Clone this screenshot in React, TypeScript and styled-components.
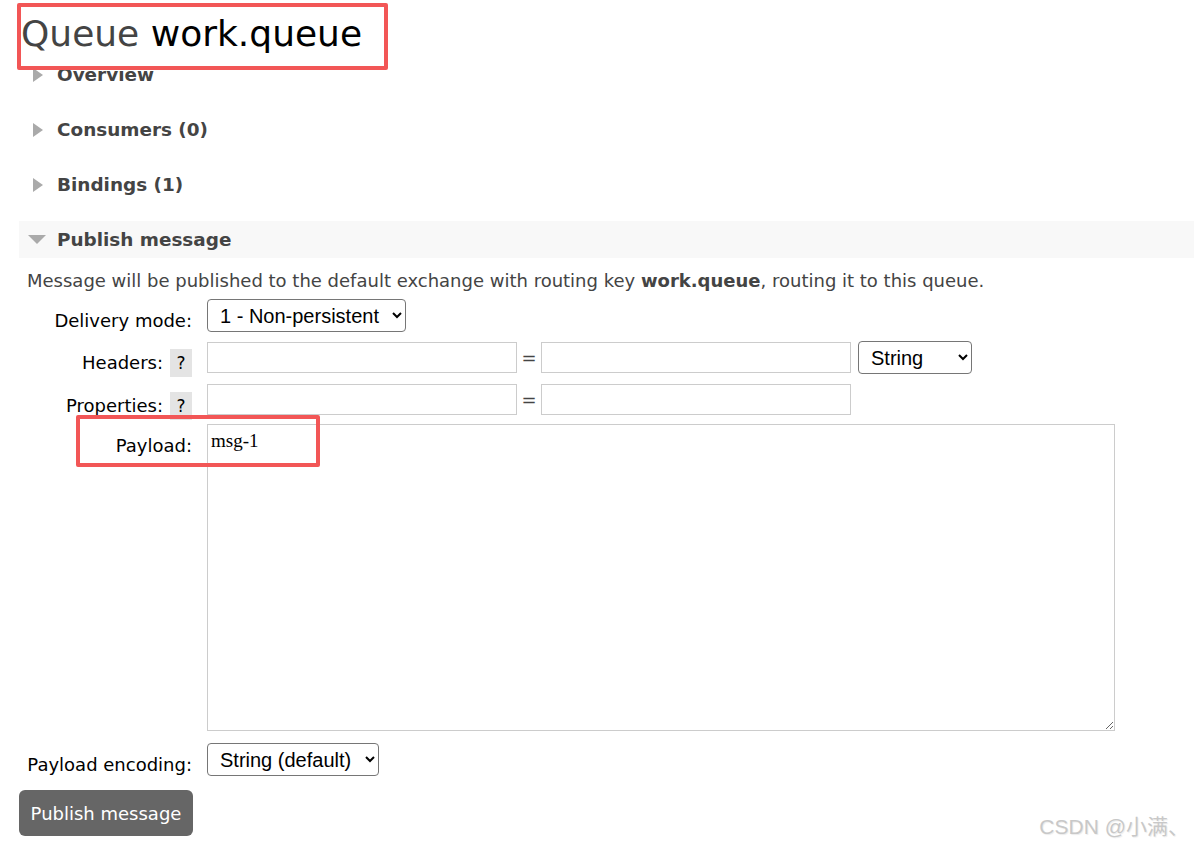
import * as React from 'react'
import styled, { createGlobalStyle } from 'styled-components'

const GlobalStyle = createGlobalStyle`
  html, body {
    margin: 0;
    padding: 0;
    background: #fff;
  }
  body {
    font-family: "DejaVu Sans", Verdana, sans-serif;
    color: #444;
  }
`

const Page = styled.div`
  position: relative;
  min-height: 846px;
  padding-left: 19px;
  box-sizing: border-box;
  overflow: hidden;
`

const Title = styled.h1`
  margin: 0;
  padding: 12px 0 0 2px;
  height: 56px;
  box-sizing: border-box;
  line-height: 44px;
  font-size: 36px;
  font-weight: normal;
  color: #444;
  white-space: nowrap;
`

const TitleName = styled.span`
  color: #000;
`

const SectionBar = styled.div<{ $open?: boolean }>`
  display: flex;
  align-items: center;
  height: 37px;
  padding-left: 9px;
  margin-bottom: ${p => (p.$open ? 0 : 18)}px;
  background: ${p => (p.$open ? '#f8f8f8' : 'transparent')};
  font-size: 18.4px;
  font-weight: bold;
  color: #444;
`

const TriangleBox = styled.span`
  display: flex;
  align-items: center;
  width: 18px;
  margin-right: 11px;
`

const RightTriangle = styled.span`
  width: 0;
  height: 0;
  margin-left: 5px;
  border-left: 10px solid #aaa;
  border-top: 7px solid transparent;
  border-bottom: 7px solid transparent;
`

const DownTriangle = styled.span`
  width: 0;
  height: 0;
  border-top: 9px solid #aaa;
  border-left: 9px solid transparent;
  border-right: 9px solid transparent;
`

const SectionBody = styled.div`
  display: flow-root;
`

const Description = styled.p`
  margin: 12px 0 0 8px;
  line-height: 22px;
  font-size: 18px;
  color: #444;
  white-space: nowrap;
`

const FormGrid = styled.div`
  display: grid;
  grid-template-columns: 165px auto;
  column-gap: 15px;
  row-gap: 9px;
  margin: 7px 0 0 8px;
  justify-content: start;
`

const LabelCell = styled.div<{ $offset?: number }>`
  display: flex;
  justify-content: flex-end;
  align-items: flex-start;
  gap: 7px;
  height: 31px;
  padding-top: ${p => p.$offset || 0}px;
  box-sizing: border-box;
  font-size: 18px;
  color: #000;
  white-space: nowrap;
`

const LabelText = styled.span`
  margin-top: 12px;
  line-height: 20px;
`

const HelpBox = styled.span`
  display: inline-block;
  margin-top: 8px;
  width: 22px;
  height: 28px;
  line-height: 28px;
  text-align: center;
  background: #e4e4e4;
  color: #000;
  font-size: 17px;
`

const FieldRow = styled.div<{ $offset?: number }>`
  display: flex;
  align-items: center;
  padding-top: ${p => p.$offset || 0}px;
`

const Select = styled.select<{ $width: number }>`
  width: ${p => p.$width}px;
  height: 33px;
  padding: 0 6px 0 8px;
  border: 1px solid #767676;
  border-radius: 4px;
  background: #fff;
  color: #000;
  font-family: "Liberation Sans", Arial, sans-serif;
  font-size: 20px;
  box-sizing: border-box;
`

const TextInput = styled.input`
  width: 310px;
  height: 31px;
  border: 1px solid #ccc;
  padding: 0 4px;
  box-sizing: border-box;
  font-size: 16px;
  background: #fff;
`

const Equals = styled.span`
  width: 24px;
  text-align: center;
  font-size: 18px;
  color: #444;
`

const SelectSpacer = styled.span`
  width: 7px;
`

const Payload = styled.textarea`
  width: 908px;
  height: 307px;
  margin-bottom: 3px;
  border: 1px solid #ccc;
  padding: 5px 3px;
  box-sizing: border-box;
  font-family: "Liberation Serif", "Times New Roman", serif;
  font-size: 19px;
  line-height: 22px;
  color: #000;
  resize: both;
  display: block;
`

const PublishButton = styled.button`
  margin-top: 14px;
  width: 174px;
  height: 46px;
  border: none;
  border-radius: 6px;
  background: #666;
  color: #fff;
  font-family: "DejaVu Sans", Verdana, sans-serif;
  font-size: 18px;
  cursor: pointer;
`

const Highlight = styled.div<{ $x: number; $y: number; $w: number; $h: number }>`
  position: absolute;
  left: ${p => p.$x}px;
  top: ${p => p.$y}px;
  width: ${p => p.$w}px;
  height: ${p => p.$h}px;
  border: 4px solid #f25656;
  border-radius: 2px;
  box-sizing: border-box;
  pointer-events: none;
`

const Watermark = styled.div`
  position: absolute;
  right: 5px;
  bottom: 6px;
  font-family: "Liberation Sans", "Noto Sans CJK SC", sans-serif;
  font-size: 21px;
  color: #c8c8c8;
  text-shadow: 1px 1px 1px rgba(0, 0, 0, 0.08);
`

const Section = ({ title, open }: { title: string; open?: boolean }) => (
  <SectionBar $open={open}>
    <TriangleBox>{open ? <DownTriangle /> : <RightTriangle />}</TriangleBox>
    {title}
  </SectionBar>
)

const Label = ({ text, help, offset }: { text: string; help?: boolean; offset?: number }) => (
  <LabelCell $offset={offset}>
    <LabelText>{text}</LabelText>
    {help ? <HelpBox>?</HelpBox> : null}
  </LabelCell>
)

export default function App() {
  return (
    <Page>
      <GlobalStyle />
      <Title>
        Queue <TitleName>work.queue</TitleName>
      </Title>
      <Section title="Overview" />
      <Section title="Consumers (0)" />
      <Section title="Bindings (1)" />
      <Section title="Publish message" open />
      <SectionBody>
        <Description>
          Message will be published to the default exchange with routing key{' '}
          <b>work.queue</b>, routing it to this queue.
        </Description>
        <FormGrid>
          <Label text="Delivery mode:" />
          <FieldRow>
            <Select $width={199} defaultValue="1">
              <option value="1">1 - Non-persistent</option>
              <option value="2">2 - Persistent</option>
            </Select>
          </FieldRow>

          <Label text="Headers:" help />
          <FieldRow>
            <TextInput />
            <Equals>=</Equals>
            <TextInput />
            <SelectSpacer />
            <Select $width={114} defaultValue="string">
              <option value="string">String</option>
              <option value="number">Number</option>
              <option value="boolean">Boolean</option>
              <option value="list">List</option>
            </Select>
          </FieldRow>

          <Label text="Properties:" help offset={1} />
          <FieldRow $offset={1}>
            <TextInput />
            <Equals>=</Equals>
            <TextInput />
          </FieldRow>

          <Label text="Payload:" />
          <Payload defaultValue="msg-1" />

          <Label text="Payload encoding:" />
          <FieldRow>
            <Select $width={172} defaultValue="string">
              <option value="string">String (default)</option>
              <option value="base64">Base64</option>
            </Select>
          </FieldRow>
        </FormGrid>
        <PublishButton>Publish message</PublishButton>
      </SectionBody>

      <Highlight $x={17} $y={3} $w={371} $h={67} />
      <Highlight $x={76} $y={415} $w={244} $h={52} />
      <Watermark>CSDN @小满、</Watermark>
    </Page>
  )
}
